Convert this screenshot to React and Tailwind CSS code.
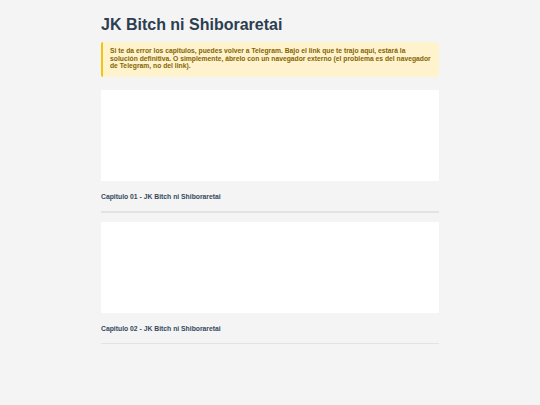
export default function App() {
	const chapters = [
		{ title: 'Capitulo 01 - JK Bitch ni Shiboraretai', line: 'border-b-[2px]' },
		{ title: 'Capitulo 02 - JK Bitch ni Shiboraretai', line: 'border-b' },
	]

	return (
		<div className="min-h-[405px] bg-[#f4f4f4] font-['Liberation_Sans',Arial,sans-serif]">
			<div className="mx-auto w-[338px] pt-[15px]">
				<h1 className="text-[16px] leading-[20px] font-bold text-[#2c3e50]">JK Bitch ni Shiboraretai</h1>
				<div className="mt-[7px] h-[35px] overflow-hidden whitespace-nowrap rounded-[2px] border-l-[2px] border-[#f1c40f] bg-[#fff3cd] pl-[7px] pt-[5px] text-[6.75px] leading-[7.6px] font-bold text-[#856404]">
					Si te da error los capitulos, puedes volver a Telegram. Bajo el link que te trajo aqui, estará la
					<br />
					solución definitiva. O simplemente, ábrelo con un navegador externo (el problema es del navegador
					<br />
					de Telegram, no del link).
				</div>
				<div className="mt-[13px] flex flex-col gap-[9px]">
					{chapters.map((c) => (
						<div key={c.title} className={`${c.line} border-[#e3e3e3]`}>
							<div className="h-[91px] bg-white" />
							<div className="pt-[12px] pb-[10px] text-[6.8px] leading-[8px] font-bold text-[#34495e]">{c.title}</div>
						</div>
					))}
				</div>
			</div>
		</div>
	)
}
